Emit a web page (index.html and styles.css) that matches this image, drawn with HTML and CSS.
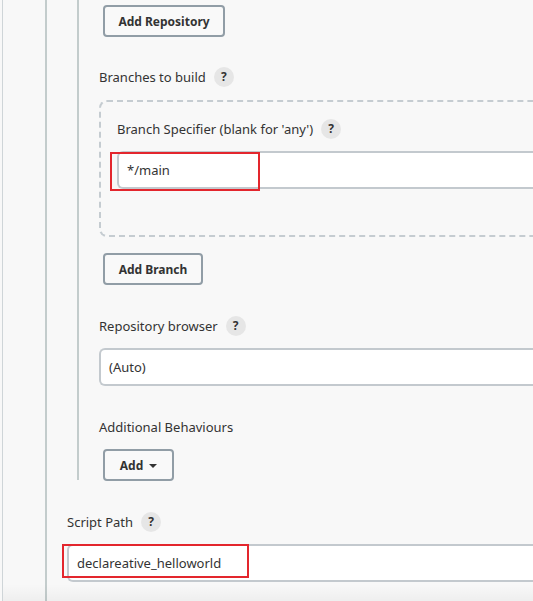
FILE: index.html
```html
<!DOCTYPE html>
<html>
<head>
<meta charset="utf-8">
<link rel="stylesheet" href="styles.css">
</head>
<body>
<div class="frame">
  <div class="pipeline">
    <div class="scm">
      <button class="btn btn-repo">Add Repository</button>

      <div class="field field-branches">
        <div class="label">Branches to build <span class="help">?</span></div>
        <div class="dashed">
          <div class="label">Branch Specifier (blank for 'any') <span class="help">?</span></div>
          <div class="input-wrap">
            <div class="input">*/main</div>
            <div class="mark mark-branch"></div>
          </div>
        </div>
      </div>

      <button class="btn btn-branch">Add Branch</button>

      <div class="field field-browser">
        <div class="label">Repository browser <span class="help">?</span></div>
        <div class="input select">(Auto)</div>
      </div>

      <div class="field field-behav">
        <div class="label">Additional Behaviours</div>
        <button class="btn btn-add">Add <span class="caret"></span></button>
      </div>
    </div>

    <div class="field field-script">
      <div class="label">Script Path <span class="help">?</span></div>
      <div class="input-wrap">
        <div class="input script">declareative_helloworld</div>
        <div class="mark mark-script"></div>
      </div>
    </div>
  </div>
  <div class="shade"></div>
</div>
</body>
</html>
```

FILE: styles.css
```css
html, body {
  margin: 0;
  padding: 0;
  background: #f8f8f8;
  overflow: hidden;
  height: 601px;
}
body {
  font-family: "Noto Sans", "Open Sans", sans-serif;
  font-size: 13px;
  color: #333;
}
.frame {
  margin-left: 2px;
  border-left: 1px solid #cfd5d8;
  padding-left: 42px;
  height: 601px;
  overflow: hidden;
  position: relative;
}
.pipeline {
  border-left: 2px solid #c3cccc;
  padding-left: 20px;
  height: 601px;
}
.scm {
  margin-left: 10px;
  border-left: 2px solid #c3cccc;
  padding-left: 20px;
  padding-top: 5px;
  height: 475px;
}
.btn {
  display: flex;
  align-items: center;
  justify-content: center;
  background: #f9f9f9;
  border: 2px solid #919da6;
  border-radius: 4px;
  font-family: inherit;
  font-size: 12px;
  font-weight: 700;
  color: #333;
  height: 32px;
  padding: 0;
  margin-left: 4px;
}
.btn-repo { width: 122px; }
.btn-branch { width: 100px; margin-top: 16px; }
.btn-add { width: 71px; margin-top: 12px; gap: 6px; }
.caret {
  width: 0;
  height: 0;
  border-left: 4px solid transparent;
  border-right: 4px solid transparent;
  border-top: 4px solid #333;
  margin-top: 1px;
}
.label {
  display: flex;
  align-items: center;
  gap: 8px;
  height: 20px;
  line-height: 20px;
}
.help {
  display: inline-flex;
  align-items: center;
  justify-content: center;
  width: 20px;
  height: 20px;
  border-radius: 50%;
  background: #e6e6e6;
  font-size: 12px;
  font-weight: 700;
  color: #333;
}
.field { margin-top: 31px; }
.field-branches { margin-top: 30px; }
.dashed {
  margin-top: 13px;
  margin-right: -20px;
  border: 2px dashed #c5ccd1;
  border-radius: 8px;
  padding: 17px 0 46px 16px;
  height: 70px;
}
.input-wrap { position: relative; margin-top: 12px; }
.input {
  background: #fff;
  border: 2px solid #c3c9ce;
  border-right: none;
  border-radius: 6px 0 0 6px;
  height: 34px;
  display: flex;
  align-items: center;
  padding-left: 8px;
  margin-right: -20px;
}
.mark {
  position: absolute;
  border: 2px solid #e3262d;
  pointer-events: none;
}
.mark-branch { left: -7px; top: 1px; width: 146px; height: 35px; }
.mark-script { left: -5px; top: 0; width: 183px; height: 30px; }
.field-browser .input { margin-top: 12px; }
.field-script { margin-top: 32px; }
.shade {
  position: absolute;
  left: -3px;
  right: 0;
  bottom: 0;
  height: 17px;
  background: linear-gradient(rgba(0,0,0,0), rgba(0,0,0,0.04));
  pointer-events: none;
}
```
